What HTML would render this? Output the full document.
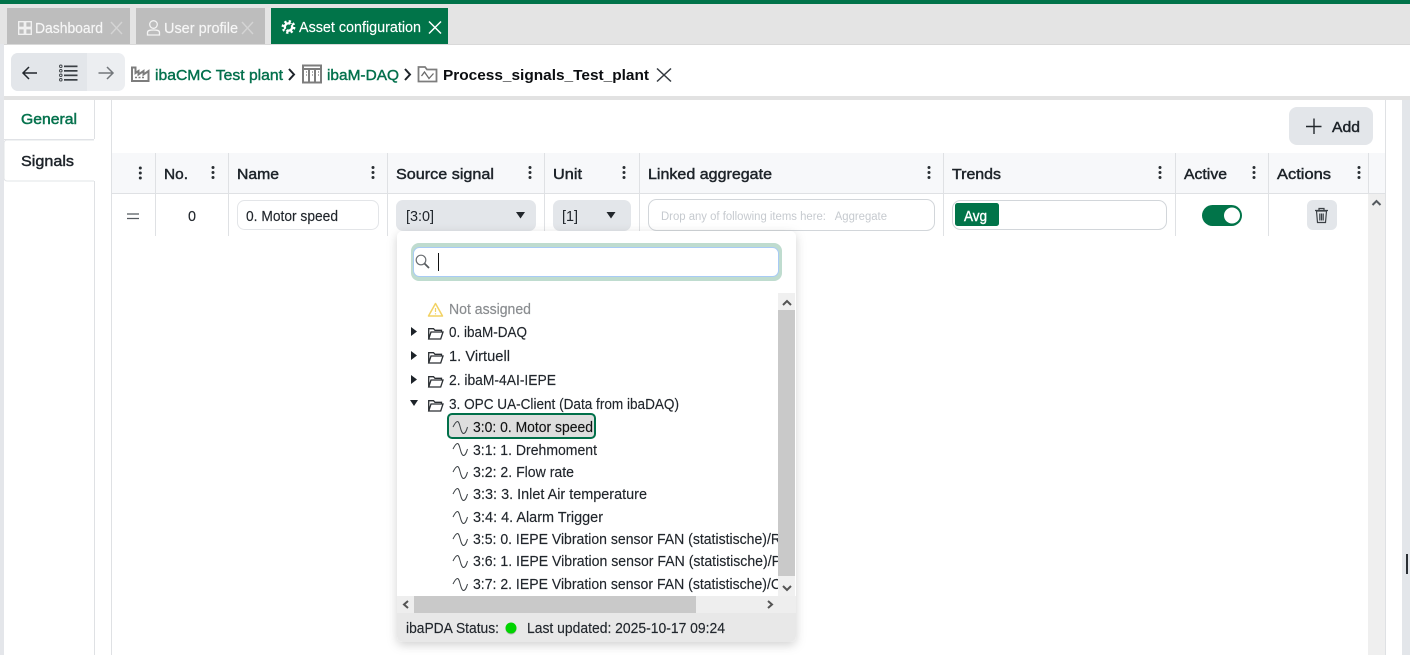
<!DOCTYPE html>
<html><head><meta charset="utf-8"><title>Asset configuration</title>
<style>
html,body{margin:0;padding:0;background:#fff;overflow:hidden;width:1410px;height:655px}
svg{display:block}
text{font-family:"Liberation Sans",sans-serif;font-size:15px;fill:#20252b;white-space:pre}
.h{font-size:15px;fill:#1d2329;stroke:#1d2329;stroke-width:.45}
.ln{fill:#dfe1e4}
.g{fill:none;stroke:#7d7d7d;stroke-width:1.6}
.w{stroke:#2a2f34;stroke-width:.15}
</style></head><body>
<svg width="1410" height="655" viewBox="0 0 1410 655" xmlns="http://www.w3.org/2000/svg">
<defs>
<filter id="sh" x="-10%" y="-10%" width="120%" height="120%"><feDropShadow dx="0" dy="3" stdDeviation="5" flood-color="#000" flood-opacity=".18"/></filter>
<clipPath id="lc"><rect x="397" y="293" width="381" height="303"/></clipPath>
<path id="wave" d="M0 6C1.500 3 3 .5 4.500 .5C7 .5 7.500 12.500 10.500 12.500C12.500 12.500 13.500 9.500 14.500 6" fill="none" stroke="#3b4044" stroke-width="1"/>
<path id="fold" d="M.7 13V2.700H5.500L7 4.300H13.500V6M.7 13L3 6H15L12.700 13Z" fill="none" stroke="#2b2f33" stroke-width="1.300"/>
</defs>
<rect width="1410" height="655" fill="#fff"/>
<rect width="1410" height="45" fill="#e4e4e4"/>
<rect width="1410" height="4" fill="#01734a"/>
<!-- tabs -->
<rect x="7" y="8" width="123" height="36" fill="#bdbdbd"/>
<rect x="136" y="8" width="129" height="36" fill="#bdbdbd"/>
<rect x="271" y="8" width="177" height="36" fill="#017449"/>
<g fill="none" stroke="#f3f3f3" stroke-width="1.300">
<rect x="18.700" y="21.700" width="5.600" height="5.600"/><rect x="25.700" y="21.700" width="5.600" height="5.600"/><rect x="18.700" y="28.700" width="5.600" height="5.600"/><rect x="25.700" y="28.700" width="5.600" height="5.600"/>
<circle cx="153.500" cy="24.500" r="3.800"/><path d="M147.500 35V32.500C147.500 30.500 149.500 30 153.500 30S159.500 30.500 159.500 32.500V35Z"/>
</g>
<path d="M111 22L122 34M122 22L111 34M242 22L253 34M253 22L242 34" stroke="#d4d4d4" stroke-width="1.400" fill="none"/>
<path d="M429 21.500L441 33.500M441 21.500L429 33.500" stroke="#fff" stroke-width="1.500" fill="none"/>
<circle cx="288.500" cy="27" r="5.500" fill="none" stroke="#fff" stroke-width="2.800" stroke-dasharray="2.200 2.120"/>
<circle cx="288.500" cy="27" r="3.700" fill="none" stroke="#fff" stroke-width="2.400"/>
<path d="M285 30.500L291.500 24" stroke="#017449" stroke-width="1.500"/>
<text x="35" y="33" textLength="68" lengthAdjust="spacingAndGlyphs" style="fill:#f6f6f6;stroke:#f6f6f6;stroke-width:.2">Dashboard</text>
<text x="164" y="33" textLength="74" lengthAdjust="spacingAndGlyphs" style="fill:#f6f6f6;stroke:#f6f6f6;stroke-width:.2">User profile</text>
<text x="299" y="32" textLength="122" lengthAdjust="spacingAndGlyphs" style="fill:#fff;stroke:#fff;stroke-width:.15">Asset configuration</text>
<!-- toolbar -->
<rect x="4" y="45" width="1406" height="51" fill="#fff"/>
<rect x="0" y="44" width="4" height="611" fill="#e4e6ea"/>
<rect x="4" y="44" width="1406" height="1" fill="#d9d9d9"/>
<rect x="4" y="96" width="1406" height="4" fill="#e2e2e2"/>
<rect x="1402" y="100" width="8" height="555" fill="#e3e6ea"/>
<rect x="1406" y="554" width="2" height="20" fill="#2a2f34"/>
<rect x="11" y="53" width="114" height="38" rx="7" fill="#eceef1"/>
<path d="M87 53H18a7 7 0 0 0-7 7V84a7 7 0 0 0 7 7H87Z" fill="#e3e6ea"/>
<path d="M37 73H23M29 67L23 73L29 79" fill="none" stroke="#22272c" stroke-width="1.500"/>
<path d="M112.500 73H98.500M107 67L113 73L107 79" fill="none" stroke="#73777b" stroke-width="1.500"/>
<g fill="#3a3f44"><rect x="64" y="65.500" width="13.500" height="1.700"/><rect x="64" y="70" width="13.500" height="1.700"/><rect x="64" y="74.500" width="13.500" height="1.700"/><rect x="64" y="79" width="13.500" height="1.700"/></g>
<g fill="none" stroke="#3a3f44" stroke-width=".9"><circle cx="60.800" cy="66.300" r="1.300"/><circle cx="60.800" cy="70.800" r="1.300"/><circle cx="60.800" cy="75.300" r="1.300"/><circle cx="60.800" cy="79.800" r="1.300"/></g>
<!-- breadcrumb icons -->
<path d="M132 67.500V81H148.500V71L143.500 74.500V71L138.500 74.500V71L135.500 73V67.500Z" fill="none" stroke="#7d7d7d" stroke-width="2"/>
<path d="M135 77.500h2M138.500 77.500h2M142 77.500h2" stroke="#7d7d7d" stroke-width="1.500"/>
<path d="M289 69L294 74.500L289 80" fill="none" stroke="#1d2329" stroke-width="2"/>
<g fill="none" stroke="#7d7d7d" stroke-width="2"><rect x="303" y="65.500" width="18" height="17"/><path d="M303 69H321M309 69V82.500M315 69V82.500"/></g>
<path d="M306 72h1M306 75h1M312 72h1M312 75h1M318 72h1M318 75h1" stroke="#7d7d7d" stroke-width="1.300"/>
<path d="M405 69L410 74.500L405 80" fill="none" stroke="#1d2329" stroke-width="2"/>
<path d="M418.500 81.500V67H425L427 69.500H436.500V81.500Z" fill="none" stroke="#7d7d7d" stroke-width="1.800"/>
<path d="M421.500 76L424.500 72L429 78.500L433.500 73.500" fill="none" stroke="#6a6a6a" stroke-width="1.300"/>
<text x="155" y="80" textLength="128" lengthAdjust="spacingAndGlyphs" style="fill:#03704c;stroke:#03704c;stroke-width:.4">ibaCMC Test plant</text>
<text x="327" y="80" textLength="72" lengthAdjust="spacingAndGlyphs" style="fill:#03704c;stroke:#03704c;stroke-width:.4">ibaM-DAQ</text>
<text x="443" y="80" textLength="206" lengthAdjust="spacingAndGlyphs" style="font-weight:700;fill:#0b0d10">Process_signals_Test_plant</text>
<path d="M657 68.500L671 81.500M671 68.500L657 81.500" stroke="#33393f" stroke-width="1.500" fill="none"/>
<!-- side tabs -->
<rect x="94" y="100" width="1" height="39" class="ln"/>
<rect x="94" y="181" width="1" height="474" class="ln"/>
<rect x="4" y="139" width="90" height="1" class="ln"/>
<path d="M94 181H7a3 3 0 0 1-3-3V143a3 3 0 0 1 3-3H94" fill="#fff" stroke="#e2e4e7"/>
<text x="21" y="124" textLength="56" lengthAdjust="spacingAndGlyphs" style="fill:#05724d;stroke:#05724d;stroke-width:.5">General</text>
<text x="21" y="166" textLength="53" lengthAdjust="spacingAndGlyphs" class="h">Signals</text>
<rect x="111" y="100" width="1" height="555" class="ln"/>
<rect x="1385" y="100" width="1" height="555" class="ln"/>
<!-- add button -->
<rect x="1289" y="107" width="84" height="38" rx="8" fill="#e3e6ea"/>
<path d="M1314 118.500V134M1306 126.500H1321.500" stroke="#23282d" stroke-width="1.400"/>
<text x="1332" y="132" textLength="28" lengthAdjust="spacingAndGlyphs" class="h">Add</text>
<!-- table header -->
<rect x="112" y="153" width="1273" height="40" fill="#f7f8fa"/>
<rect x="112" y="193" width="1273" height="1" class="ln"/>
<g class="ln">
<rect x="155" y="153" width="1" height="83"/><rect x="228" y="153" width="1" height="83"/><rect x="387" y="153" width="1" height="83"/><rect x="544" y="153" width="1" height="83"/><rect x="639" y="153" width="1" height="83"/><rect x="943" y="153" width="1" height="83"/><rect x="1175" y="153" width="1" height="83"/><rect x="1268" y="153" width="1" height="83"/><rect x="1368" y="153" width="1" height="40"/>
</g>
<text x="164" y="179" textLength="24" lengthAdjust="spacingAndGlyphs" class="h">No.</text>
<text x="237" y="179" textLength="42" lengthAdjust="spacingAndGlyphs" class="h">Name</text>
<text x="396" y="179" textLength="98" lengthAdjust="spacingAndGlyphs" class="h">Source signal</text>
<text x="553" y="179" textLength="29" lengthAdjust="spacingAndGlyphs" class="h">Unit</text>
<text x="648" y="179" textLength="124" lengthAdjust="spacingAndGlyphs" class="h">Linked aggregate</text>
<text x="952" y="179" textLength="49" lengthAdjust="spacingAndGlyphs" class="h">Trends</text>
<text x="1184" y="179" textLength="43" lengthAdjust="spacingAndGlyphs" class="h">Active</text>
<text x="1277" y="179" textLength="54" lengthAdjust="spacingAndGlyphs" class="h">Actions</text>
<g fill="#2a2f34">
<circle cx="140.300" cy="168" r="1.500"/><circle cx="140.300" cy="173" r="1.500"/><circle cx="140.300" cy="178" r="1.500"/>
<circle cx="213" cy="167.500" r="1.500"/><circle cx="213" cy="172.500" r="1.500"/><circle cx="213" cy="177.500" r="1.500"/>
<circle cx="373" cy="167.500" r="1.500"/><circle cx="373" cy="172.500" r="1.500"/><circle cx="373" cy="177.500" r="1.500"/>
<circle cx="530" cy="167.500" r="1.500"/><circle cx="530" cy="172.500" r="1.500"/><circle cx="530" cy="177.500" r="1.500"/>
<circle cx="624" cy="167.500" r="1.500"/><circle cx="624" cy="172.500" r="1.500"/><circle cx="624" cy="177.500" r="1.500"/>
<circle cx="929" cy="167.500" r="1.500"/><circle cx="929" cy="172.500" r="1.500"/><circle cx="929" cy="177.500" r="1.500"/>
<circle cx="1160" cy="167.500" r="1.500"/><circle cx="1160" cy="172.500" r="1.500"/><circle cx="1160" cy="177.500" r="1.500"/>
<circle cx="1254" cy="167.500" r="1.500"/><circle cx="1254" cy="172.500" r="1.500"/><circle cx="1254" cy="177.500" r="1.500"/>
<circle cx="1359" cy="167.500" r="1.500"/><circle cx="1359" cy="172.500" r="1.500"/><circle cx="1359" cy="177.500" r="1.500"/>
</g>
<!-- row -->
<path d="M127 214H139M127 218.500H139" stroke="#555a5f" stroke-width="1.300"/>
<text x="188" y="221" textLength="8" lengthAdjust="spacingAndGlyphs" class="w">0</text>
<rect x="237.500" y="200.500" width="141" height="29" rx="7" fill="#fff" stroke="#e3e5e8"/>
<text x="246" y="221" textLength="92" lengthAdjust="spacingAndGlyphs" class="w">0. Motor speed</text>
<rect x="396" y="200" width="140" height="31" rx="7" fill="#e3e6ea"/>
<text x="406" y="221" textLength="28" lengthAdjust="spacingAndGlyphs">[3:0]</text>
<path d="M516 212H525L520.500 218.500Z" fill="#22272c"/>
<rect x="553" y="200" width="78" height="31" rx="7" fill="#e3e6ea"/>
<text x="562" y="221" textLength="16" lengthAdjust="spacingAndGlyphs">[1]</text>
<path d="M610.500 212H619.500L615 218.500Z" fill="#22272c" transform="translate(-4 0)"/>
<rect x="648.500" y="199.500" width="286" height="31" rx="8" fill="#fff" stroke="#d2d6da"/>
<text x="661" y="220" textLength="226" lengthAdjust="spacingAndGlyphs" style="font-size:11.500px;fill:#c6cacf">Drop any of following items here:   Aggregate</text>
<rect x="952.500" y="200.500" width="214" height="29" rx="8" fill="#fff" stroke="#d2d6da"/>
<rect x="955" y="203" width="44" height="23" rx="2.500" fill="#017449"/>
<text x="964" y="221" textLength="23" lengthAdjust="spacingAndGlyphs" style="fill:#fff;stroke:#fff;stroke-width:.4">Avg</text>
<rect x="1202" y="205" width="40" height="21" rx="10.500" fill="#017449"/>
<circle cx="1232" cy="215.500" r="8" fill="#fff"/>
<rect x="1307" y="200" width="30" height="30" rx="6" fill="#e3e6ea"/>
<path d="M1316.500 211H1326.500L1325.500 222.500H1317.500ZM1315 210.500H1328M1319 210V208.500H1324V210M1319.800 213.500V220.500M1321.500 213.500V220.500M1323.200 213.500V220.500" fill="none" stroke="#3b4045" stroke-width="1.200"/>
<!-- main scrollbar -->
<rect x="1368" y="194" width="17" height="461" fill="#efefef"/>
<path d="M1372.500 205L1376.500 201L1380.500 205" fill="none" stroke="#555a5f" stroke-width="2"/>
<!-- dropdown -->
<rect x="397" y="231" width="399" height="411" rx="6" fill="#fff" filter="url(#sh)"/>
<rect x="411" y="243" width="371" height="38" rx="8" fill="#bfdccf"/>
<rect x="413.500" y="247.500" width="365" height="29" rx="6" fill="#fff" stroke="#a8cbf5"/>
<circle cx="421" cy="260" r="4.800" fill="none" stroke="#6a6e72" stroke-width="1.200"/>
<path d="M424.500 263.500L429 268" stroke="#55595d" stroke-width="1.800"/>
<rect x="438" y="253" width="1" height="18" fill="#111"/>
<!-- tree -->
<path d="M435.500 303.500L442.500 316H428.500Z" fill="none" stroke="#f2d264" stroke-width="1.500" stroke-linejoin="round"/>
<path d="M435.500 308V312M435.500 313.200V314.400" stroke="#f2d264" stroke-width="1.200"/>
<text x="449" y="314" textLength="82" lengthAdjust="spacingAndGlyphs" style="fill:#8a8d90;stroke:#8a8d90;stroke-width:.2">Not assigned</text>
<path d="M411 327L417 331.500L411 336Z M411 351L417 355.500L411 360Z M411 375L417 379.500L411 384Z M410 400H418L414 406Z" fill="#1d2329"/>
<use href="#fold" x="428" y="326"/><use href="#fold" x="428" y="350"/><use href="#fold" x="428" y="374"/><use href="#fold" x="428" y="398"/>
<text x="449" y="337" textLength="78" lengthAdjust="spacingAndGlyphs" class="w">0. ibaM-DAQ</text>
<text x="449" y="361" textLength="61" lengthAdjust="spacingAndGlyphs" class="w">1. Virtuell</text>
<text x="449" y="385" textLength="107" lengthAdjust="spacingAndGlyphs" class="w">2. ibaM-4AI-IEPE</text>
<text x="449" y="409" textLength="230" lengthAdjust="spacingAndGlyphs" class="w">3. OPC UA-Client (Data from ibaDAQ)</text>
<rect x="448" y="414" width="147" height="24" rx="4" fill="#dedede" stroke="#01704a" stroke-width="2"/>
<use href="#wave" x="453" y="421"/><use href="#wave" x="453" y="443"/><use href="#wave" x="453" y="466"/><use href="#wave" x="453" y="488"/><use href="#wave" x="453" y="511"/><use href="#wave" x="453" y="533"/><use href="#wave" x="453" y="555"/><use href="#wave" x="453" y="578"/>
<g clip-path="url(#lc)">
<text x="473" y="432" textLength="120" lengthAdjust="spacingAndGlyphs" class="w" style="fill:#111">3:0: 0. Motor speed</text>
<text x="473" y="455" textLength="124" lengthAdjust="spacingAndGlyphs" class="w">3:1: 1. Drehmoment</text>
<text x="473" y="477" textLength="101" lengthAdjust="spacingAndGlyphs" class="w">3:2: 2. Flow rate</text>
<text x="473" y="499" textLength="174" lengthAdjust="spacingAndGlyphs" class="w">3:3: 3. Inlet Air temperature</text>
<text x="473" y="522" textLength="130" lengthAdjust="spacingAndGlyphs" class="w">3:4: 4. Alarm Trigger</text>
<text x="473" y="544" textLength="308" lengthAdjust="spacingAndGlyphs" class="w">3:5: 0. IEPE Vibration sensor FAN (statistische)/R</text>
<text x="473" y="566" textLength="308" lengthAdjust="spacingAndGlyphs" class="w">3:6: 1. IEPE Vibration sensor FAN (statistische)/P</text>
<text x="473" y="589" textLength="308" lengthAdjust="spacingAndGlyphs" class="w">3:7: 2. IEPE Vibration sensor FAN (statistische)/C</text>
</g>
<!-- dd scrollbars -->
<rect x="778" y="293" width="17" height="303" fill="#f0f0f0"/>
<rect x="778" y="310" width="17" height="266" fill="#c9c9c9"/>
<path d="M783 305L787 301L791 305" fill="none" stroke="#555" stroke-width="2"/>
<path d="M783 586L787 590L791 586" fill="none" stroke="#555" stroke-width="2"/>
<rect x="397" y="596" width="399" height="17" fill="#eeeeee"/>
<rect x="414" y="596" width="282" height="17" fill="#c9c9c9"/>
<path d="M408 601L404 604.500L408 608" fill="none" stroke="#555" stroke-width="2"/>
<path d="M768 601L772 604.500L768 608" fill="none" stroke="#555" stroke-width="2"/>
<path d="M397 613H796V636a6 6 0 0 1-6 6H403a6 6 0 0 1-6-6Z" fill="#e8e8e8"/>
<text x="406" y="633" textLength="93" lengthAdjust="spacingAndGlyphs" class="w">ibaPDA Status:</text>
<circle cx="511" cy="629" r="5.500" fill="#777" opacity=".45"/>
<circle cx="511" cy="628" r="5.500" fill="#00d400"/>
<text x="527" y="633" textLength="198" lengthAdjust="spacingAndGlyphs" class="w">Last updated: 2025-10-17 09:24</text>
</svg>
</body></html>
